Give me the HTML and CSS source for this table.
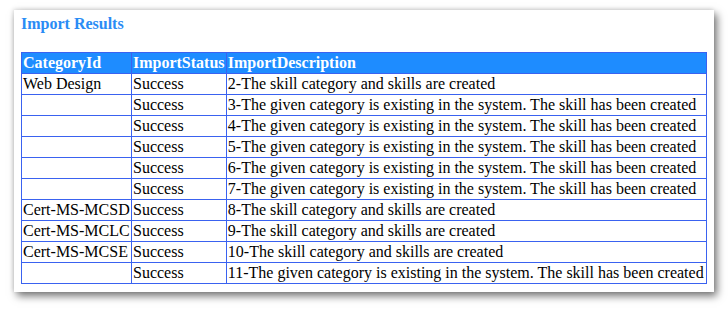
FILE: index.html
```html
<!DOCTYPE html>
<html>
<head>
<meta charset="utf-8">
<link rel="stylesheet" href="styles.css">
</head>
<body>
<div class="page">
<div class="card">
  <h2 class="title">Import Results</h2>
  <table class="results">
    <thead>
      <tr><th>CategoryId</th><th>ImportStatus</th><th>ImportDescription</th></tr>
    </thead>
    <tbody>
      <tr><td>Web Design</td><td>Success</td><td>2-The skill category and skills are created</td></tr>
      <tr><td></td><td>Success</td><td>3-The given category is existing in the system. The skill has been created</td></tr>
      <tr><td></td><td>Success</td><td>4-The given category is existing in the system. The skill has been created</td></tr>
      <tr><td></td><td>Success</td><td>5-The given category is existing in the system. The skill has been created</td></tr>
      <tr><td></td><td>Success</td><td>6-The given category is existing in the system. The skill has been created</td></tr>
      <tr><td></td><td>Success</td><td>7-The given category is existing in the system. The skill has been created</td></tr>
      <tr><td>Cert-MS-MCSD</td><td>Success</td><td>8-The skill category and skills are created</td></tr>
      <tr><td>Cert-MS-MCLC</td><td>Success</td><td>9-The skill category and skills are created</td></tr>
      <tr><td>Cert-MS-MCSE</td><td>Success</td><td>10-The skill category and skills are created</td></tr>
      <tr><td></td><td>Success</td><td>11-The given category is existing in the system. The skill has been created</td></tr>
    </tbody>
  </table>
</div>
</div>
</body>
</html>
```
FILE: styles.css
```css
html, body {
  margin: 0;
  padding: 0;
  background: #ffffff;
}
body {
  font-family: "Liberation Serif", "Times New Roman", serif;
}
.page {
  padding: 10px 14px 18px 14px;
  min-height: 281px;
}
.card {
  width: 686px;
  padding: 6px 7px 8px 7px;
  background: #ffffff;
  box-shadow: 3px 4px 8px rgba(0, 0, 0, 0.55), -1px -1px 4px rgba(0, 0, 0, 0.12);
}
.title {
  margin: 0 0 20px 0;
  font-size: 16px;
  font-weight: bold;
  color: #2a8cf5;
  line-height: 16px;
}
.results {
  border-collapse: collapse;
  border: 1px solid #3a62f0;
  width: 686px;
  font-size: 16px;
}
.results th,
.results td {
  border: 1px solid #3a62f0;
  padding: 1px 1px;
  white-space: nowrap;
  text-align: left;
  line-height: 18px;
}
.results th {
  background: #1e8cff;
  color: #ffffff;
  font-weight: bold;
}
.results td {
  color: #000000;
}
```
